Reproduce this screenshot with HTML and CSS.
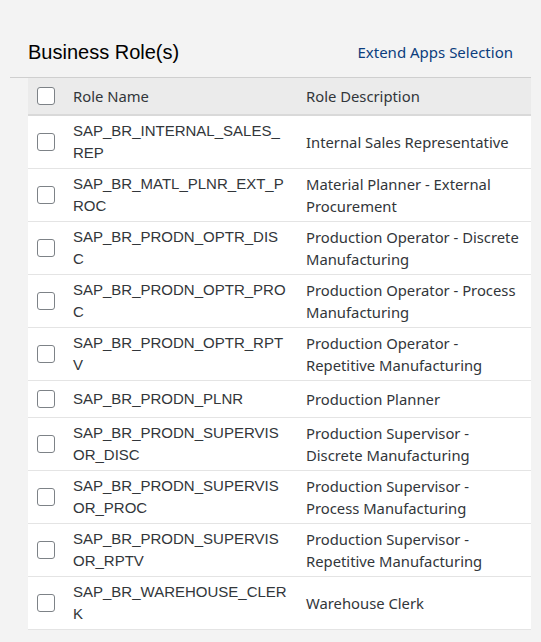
FILE: index.html
```html
<!DOCTYPE html>
<html lang="en">
<head>
<meta charset="utf-8">
<title>Business Role(s)</title>
<link rel="stylesheet" href="styles.css">
</head>
<body>
<div class="page">
  <div class="toolbar">
    <h2 class="title">Business Role(s)</h2>
    <a class="link" href="#">Extend Apps Selection</a>
  </div>
  <div class="content">
    <div class="table">
      <div class="row head">
        <div class="cell check"><span class="box"></span></div>
        <div class="cell name">Role Name</div>
        <div class="cell desc">Role Description</div>
      </div>
      <div class="row">
        <div class="cell check"><span class="box"></span></div>
        <div class="cell name">SAP_BR_INTERNAL_SALES_REP</div>
        <div class="cell desc">Internal Sales Representative</div>
      </div>
      <div class="row">
        <div class="cell check"><span class="box"></span></div>
        <div class="cell name">SAP_BR_MATL_PLNR_EXT_PROC</div>
        <div class="cell desc">Material Planner - External Procurement</div>
      </div>
      <div class="row">
        <div class="cell check"><span class="box"></span></div>
        <div class="cell name">SAP_BR_PRODN_OPTR_DISC</div>
        <div class="cell desc">Production Operator - Discrete Manufacturing</div>
      </div>
      <div class="row">
        <div class="cell check"><span class="box"></span></div>
        <div class="cell name">SAP_BR_PRODN_OPTR_PROC</div>
        <div class="cell desc">Production Operator - Process Manufacturing</div>
      </div>
      <div class="row">
        <div class="cell check"><span class="box"></span></div>
        <div class="cell name">SAP_BR_PRODN_OPTR_RPTV</div>
        <div class="cell desc">Production Operator - Repetitive Manufacturing</div>
      </div>
      <div class="row">
        <div class="cell check"><span class="box"></span></div>
        <div class="cell name">SAP_BR_PRODN_PLNR</div>
        <div class="cell desc">Production Planner</div>
      </div>
      <div class="row">
        <div class="cell check"><span class="box"></span></div>
        <div class="cell name">SAP_BR_PRODN_SUPERVISOR_DISC</div>
        <div class="cell desc">Production Supervisor - Discrete Manufacturing</div>
      </div>
      <div class="row">
        <div class="cell check"><span class="box"></span></div>
        <div class="cell name">SAP_BR_PRODN_SUPERVISOR_PROC</div>
        <div class="cell desc">Production Supervisor - Process Manufacturing</div>
      </div>
      <div class="row">
        <div class="cell check"><span class="box"></span></div>
        <div class="cell name">SAP_BR_PRODN_SUPERVISOR_RPTV</div>
        <div class="cell desc">Production Supervisor - Repetitive Manufacturing</div>
      </div>
      <div class="row">
        <div class="cell check"><span class="box"></span></div>
        <div class="cell name">SAP_BR_WAREHOUSE_CLERK</div>
        <div class="cell desc">Warehouse Clerk</div>
      </div>
    </div>
  </div>
</div>
</body>
</html>
```
FILE: styles.css
```css
* { box-sizing: border-box; }
html, body { margin: 0; padding: 0; }
body {
  background: #f3f3f3;
  font-family: "Liberation Sans", Arial, sans-serif;
  color: #32363a;
}
.page { width: 541px; }
.toolbar {
  display: flex;
  justify-content: space-between;
  align-items: center;
  height: 77px;
  padding: 40px 28px 13px 28px;
}
.title {
  margin: 0;
  font-family: "Liberation Sans", Arial, sans-serif;
  font-weight: normal;
  font-size: 20px;
  line-height: 24px;
  color: #000;
}
.link {
  font-family: "Noto Sans", sans-serif;
  font-size: 15px;
  line-height: 24px;
  color: #0b3d7d;
  text-decoration: none;
}
.content {
  margin: 0 10px;
  border-top: 1px solid #cfcfcf;
  padding-left: 18px;
}
.table { background: #fff; }
.row {
  display: grid;
  grid-template-columns: 45px 233px 1fr;
  align-items: center;
  min-height: 37px;
  padding: 4px 0;
  border-bottom: 1px solid #e4e4e4;
}
.row.head {
  background: #ebebeb;
  min-height: 38px;
  border-bottom: 2px solid #d9d9d9;
}
.cell { line-height: 22px; }
.check { padding-left: 9px; display: flex; align-items: center; }
.box {
  display: block;
  width: 18px;
  height: 18px;
  border: 1px solid #7d8287;
  border-radius: 3px;
  background: #fff;
}
.name {
  font-family: "Liberation Sans", Arial, sans-serif;
  font-size: 15px;
  padding-right: 18px;
  word-break: break-all;
  color: #32363a;
}
.desc {
  font-family: "Noto Sans", sans-serif;
  font-size: 14.8px;
  padding-right: 8px;
  color: #32363a;
}
.head .name { font-family: "Noto Sans", sans-serif; font-size: 14.8px; word-break: normal; }
```
